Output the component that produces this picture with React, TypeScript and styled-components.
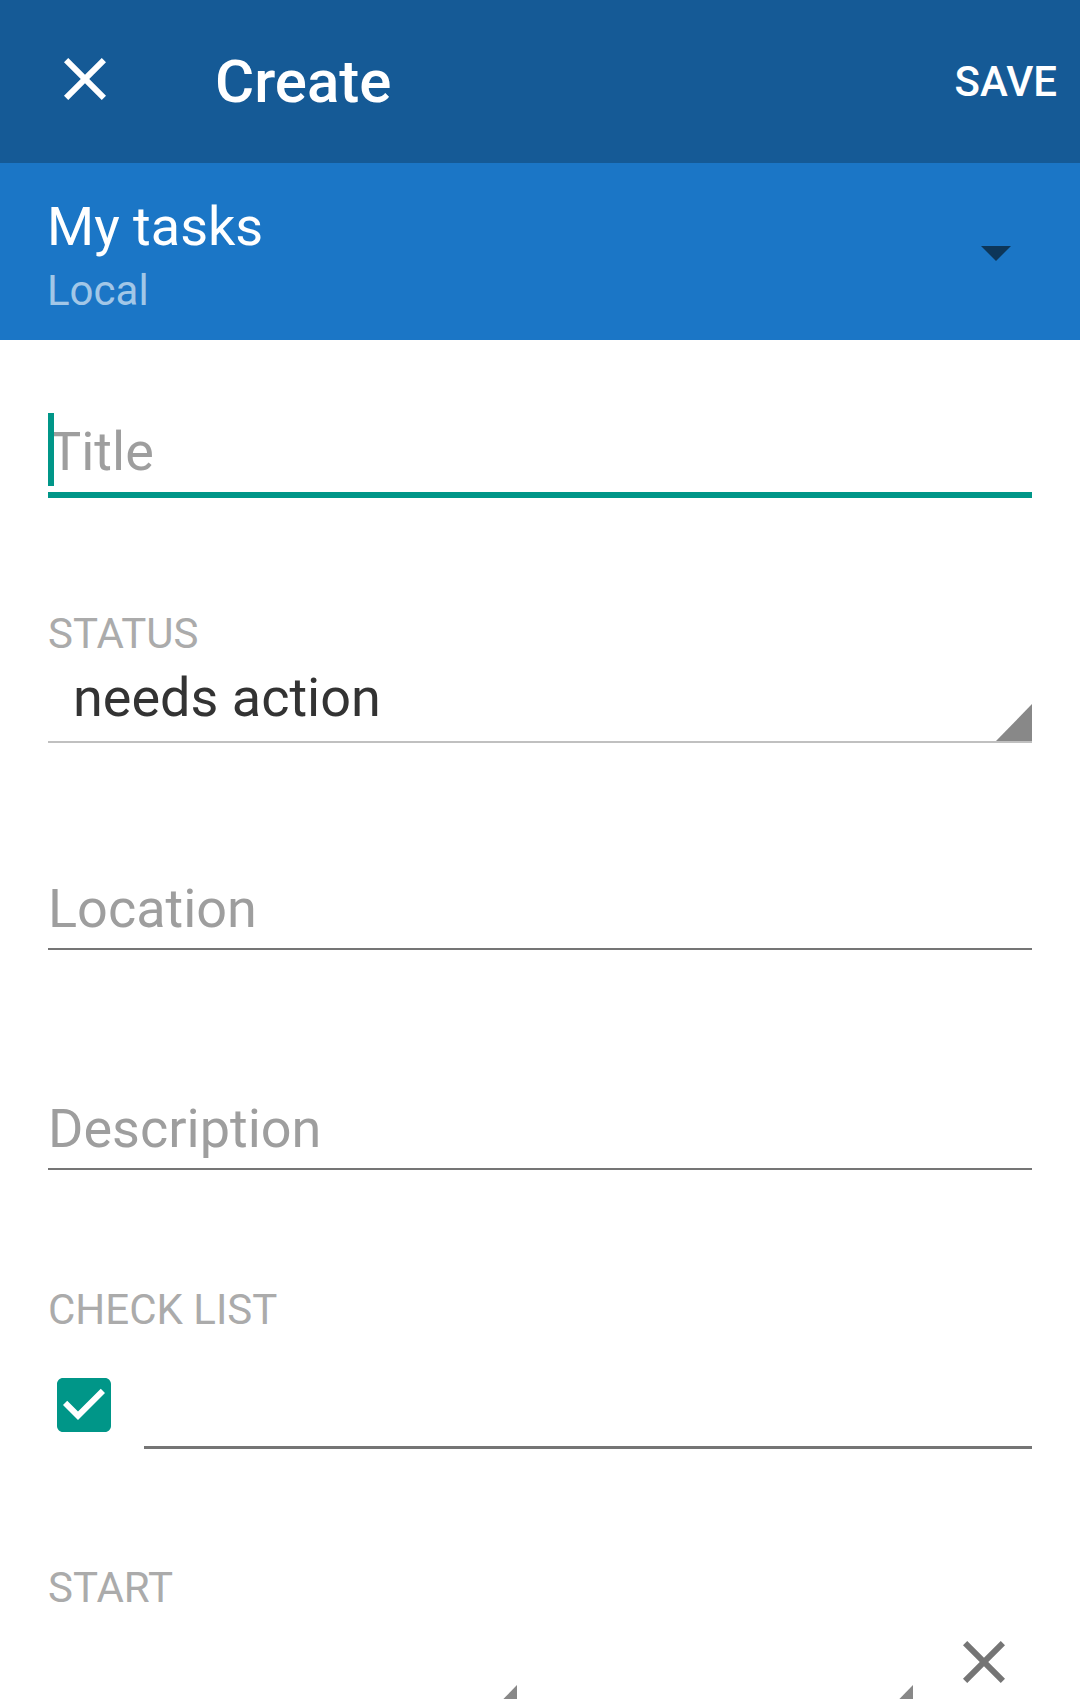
import React from "react";
import styled, { createGlobalStyle } from "styled-components";

const GlobalStyle = createGlobalStyle`
  html, body {
    margin: 0;
    padding: 0;
    background: #ffffff;
    font-family: Roboto, "Noto Sans", "Liberation Sans", sans-serif;
    overflow: hidden;
  }
  * { box-sizing: border-box; }
`;

const Screen = styled.div`
  width: 1080px;
  height: 1699px;
  overflow: hidden;
  background: #ffffff;
  display: flex;
  flex-direction: column;
`;

const Toolbar = styled.header`
  height: 163px;
  flex: 0 0 163px;
  background: #155a96;
  display: flex;
  align-items: center;
  padding: 0 23px 0 49px;
`;

const IconButton = styled.button<{ $color: string }>`
  width: 72px;
  height: 72px;
  padding: 0;
  border: 0;
  background: transparent;
  color: ${(p) => p.$color};
  display: flex;
  align-items: center;
  justify-content: center;
  flex: 0 0 72px;
`;

const NavButton = styled(IconButton)`
  margin-bottom: 5px;
`;

const ToolbarTitle = styled.h1`
  margin: 0 0 0 94px;
  flex: 1;
  font-size: 60px;
  font-weight: 500;
  color: #ffffff;
  line-height: normal;
`;

const SaveAction = styled.span`
  font-size: 42px;
  font-weight: 500;
  color: #ffffff;
  line-height: normal;
`;

const AccountBar = styled.div`
  height: 177px;
  flex: 0 0 177px;
  background: #1b76c6;
  display: flex;
  align-items: center;
  justify-content: space-between;
  padding: 0 69px 0 47px;
`;

const AccountText = styled.div`
  display: flex;
  flex-direction: column;
  gap: 4px;
  margin-top: 6px;
`;

const AccountName = styled.div`
  font-size: 54px;
  line-height: 68px;
  color: #ffffff;
`;

const AccountType = styled.div`
  font-size: 42px;
  line-height: 52px;
  color: rgba(255, 255, 255, 0.6);
`;

const DropArrow = styled.div`
  width: 0;
  height: 0;
  border-left: 15px solid transparent;
  border-right: 15px solid transparent;
  border-top: 15px solid #0d3659;
  margin-top: 4px;
`;

const Form = styled.main`
  padding: 0 48px;
  display: flex;
  flex-direction: column;
`;

const TitleField = styled.div`
  position: relative;
  margin-top: 73px;
  padding: 0 0 1px 1px;
  border-bottom: 6px solid #009688;
  font-size: 54px;
  line-height: 78px;
  color: #9e9e9e;
`;

const Cursor = styled.span`
  position: absolute;
  left: 0;
  top: 0;
  width: 6px;
  height: 73px;
  background: #009688;
`;

const SectionLabel = styled.div<{ $gap: number }>`
  margin-top: ${(p) => p.$gap}px;
  font-size: 42px;
  line-height: 50px;
  color: #ababab;
  text-transform: uppercase;
`;

const SpinnerRow = styled.div`
  margin-top: 6px;
  display: flex;
  align-items: flex-end;
  justify-content: space-between;
  border-bottom: 2px solid #c0c0c0;
`;

const SpinnerText = styled.span`
  padding: 0 0 10px 25px;
  font-size: 54px;
  line-height: 66px;
  color: #333333;
`;

const CornerMark = styled.svg`
  display: block;
  flex: 0 0 auto;
`;

const TextField = styled.div<{ $gap: number }>`
  margin-top: ${(p) => p.$gap}px;
  padding-bottom: 6px;
  border-bottom: 2px solid #757575;
  font-size: 54px;
  line-height: 66px;
  color: #9e9e9e;
`;

const CheckRow = styled.div`
  margin-top: 34px;
  display: flex;
  align-items: flex-end;
`;

const CheckBox = styled.div`
  width: 72px;
  height: 72px;
  margin: 0 0 8px 0;
  color: #009688;
  flex: 0 0 72px;
`;

const CheckInput = styled.div`
  flex: 1;
  height: 68px;
  margin-left: 24px;
  border-bottom: 3px solid #757575;
`;

const DateRow = styled.div`
  margin-top: 13px;
  display: flex;
  align-items: flex-start;
`;

const DateSpinner = styled.div<{ $width?: number }>`
  flex: ${(p) => (p.$width ? `0 0 ${p.$width}px` : "1")};
  margin-right: ${(p) => (p.$width ? 24 : 0)}px;
  height: 98px;
  display: flex;
  align-items: flex-end;
  justify-content: flex-end;
  border-bottom: 2px solid #c0c0c0;
`;

const ClearButton = styled(IconButton)`
  margin: 0 12px 0 35px;
`;

const CloseIcon = ({ size = 72 }: { size?: number }) => (
  <svg width={size} height={size} viewBox="0 0 24 24" fill="currentColor">
    <path d="M19 6.41L17.59 5 12 10.59 6.41 5 5 6.41 10.59 12 5 17.59 6.41 19 12 13.41 17.59 19 19 17.59 13.41 12z" />
  </svg>
);

const Corner = () => (
  <CornerMark width="36" height="37" viewBox="0 0 36 37">
    <polygon points="36,0 36,37 0,37" fill="#888888" />
  </CornerMark>
);

export default function App() {
  return (
    <>
      <GlobalStyle />
      <Screen>
        <Toolbar>
          <NavButton $color="#ffffff" aria-label="Close">
            <CloseIcon />
          </NavButton>
          <ToolbarTitle>Create</ToolbarTitle>
          <SaveAction>SAVE</SaveAction>
        </Toolbar>

        <AccountBar>
          <AccountText>
            <AccountName>My tasks</AccountName>
            <AccountType>Local</AccountType>
          </AccountText>
          <DropArrow />
        </AccountBar>

        <Form>
          <TitleField>
            <Cursor />
            Title
          </TitleField>

          <SectionLabel $gap={111}>Status</SectionLabel>
          <SpinnerRow>
            <SpinnerText>needs action</SpinnerText>
            <Corner />
          </SpinnerRow>

          <TextField $gap={133}>Location</TextField>
          <TextField $gap={146}>Description</TextField>

          <SectionLabel $gap={115}>Check list</SectionLabel>
          <CheckRow>
            <CheckBox>
              <svg width="72" height="72" viewBox="0 0 24 24" fill="currentColor">
                <path d="M19 3H5c-1.11 0-2 .9-2 2v14c0 1.1.89 2 2 2h14c1.11 0 2-.9 2-2V5c0-1.1-.89-2-2-2zm-9 14l-5-5 1.41-1.41L10 14.17l7.59-7.59L19 8l-9 9z" />
              </svg>
            </CheckBox>
            <CheckInput />
          </CheckRow>

          <SectionLabel $gap={114}>Start</SectionLabel>
          <DateRow>
            <DateSpinner $width={469}>
              <Corner />
            </DateSpinner>
            <DateSpinner>
              <Corner />
            </DateSpinner>
            <ClearButton $color="#757575" aria-label="Clear">
              <CloseIcon />
            </ClearButton>
          </DateRow>
        </Form>
      </Screen>
    </>
  );
}
